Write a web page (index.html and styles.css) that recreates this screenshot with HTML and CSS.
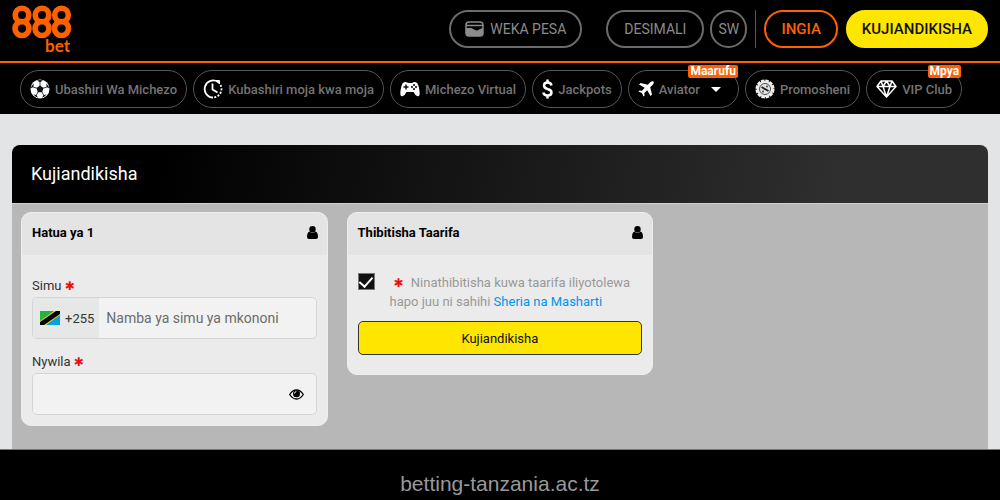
FILE: index.html
```html
<!DOCTYPE html>
<html lang="sw">
<head>
  <meta charset="UTF-8" />
  <title>Kujiandikisha | 888bet</title>
  <meta name="viewport" content="width=device-width, initial-scale=1.0" />
  <link rel="stylesheet" href="styles.css">
</head>
<body>
  <header class="topbar">
    <a class="logo" href="#">
      <svg width="60" height="35" viewBox="0 0 60 35" fill="none" stroke="#ff6000" stroke-width="5.600">
        <circle cx="10" cy="11" r="6.800" /><circle cx="10" cy="24.500" r="7" />
        <circle cx="30" cy="11" r="6.800" /><circle cx="30" cy="24.500" r="7" />
        <circle cx="49.500" cy="11" r="6.800" /><circle cx="49.500" cy="24.500" r="7" />
      </svg>
      <span class="logo-bet">bet</span>
    </a>
    <div class="actions">
      <button class="pill deposit" type="button">
        <svg width="19" height="16" viewBox="0 0 19 16">
          <rect x="1" y="1" width="17" height="14" rx="3" fill="none" stroke="#8b8b8b" stroke-width="1.500" />
          <path d="M1 4.500h17" stroke="#8b8b8b" stroke-width="1.500" />
          <path d="M1 7h5c2 0 3 2.500 6 2.500 2 0 3-2.500 6-2.500v6q0 2-2 2H3q-2 0-2-2z" fill="#8b8b8b" />
        </svg>
        WEKA PESA
      </button>
      <button class="pill odds" type="button">DESIMALI</button>
      <button class="pill lang" type="button">SW</button>
      <span class="divider"></span>
      <a class="pill login" href="#">INGIA</a>
      <a class="pill register" href="#">KUJIANDIKISHA</a>
    </div>
  </header>

  <nav class="menu">
    <a class="item" href="#">
      <svg width="20" height="20" viewBox="0 0 20 20">
        <circle cx="10" cy="10" r="9.500" fill="#fff" />
        <path d="M10 6.500l3.500 2.600-1.300 4.100H7.800L6.500 9.100zM7 1.500l3 1.700 3-1.700A9 9 0 0 0 7 1.500zM.8 9.500L3.300 8l.5-3.500A9 9 0 0 0 .8 9.500zM19.200 9.500L16.700 8l-.5-3.500a9 9 0 0 1 3 5zM3.500 15.500l3 .5 1.500 2.700A9 9 0 0 1 3.500 15.500zM16.500 15.500l-3 .5-1.500 2.700a9 9 0 0 0 4.500-3.200z" fill="#0b1216" />
        <path d="M10 3v4M3 8l4 1.200M17 8l-4 1.200M8 13l-1.500 3M12 13l1.500 3" stroke="#0b1216" stroke-width=".8" />
      </svg>
      Ubashiri Wa Michezo
    </a>
    <a class="item" href="#">
      <svg width="20" height="20" viewBox="0 0 20 20" fill="none" stroke="#fff" stroke-width="1.800">
        <path d="M10 18.500A8.500 8.500 0 1 1 15 3" />
        <path d="M17.500 6A8.500 8.500 0 0 1 10 18.500" stroke-dasharray="2 1.500" />
        <path d="M9.500 4.500V10.500L14.500 13.500" />
        <path d="M13 1.500h3.500v3.500z" fill="#fff" stroke-width="1" />
      </svg>
      Kubashiri moja kwa moja
    </a>
    <a class="item" href="#">
      <svg width="20" height="16" viewBox="0 0 20 16">
        <path d="M5 1q2 0 3 1h4q1-1 3-1 3 0 4 6 1 5 .5 7-.5 1.500-2 1.300Q15.500 15 13.500 11h-7Q4.500 15 2.500 15.300 1 15.500.5 14 0 12 1 7 2 1 5 1z" fill="#fff" />
        <path d="M6 3.500v5M3.500 6h5" stroke="#101010" stroke-width="1.500" />
        <circle cx="14" cy="4" r="1" /><circle cx="16" cy="6" r="1" /><circle cx="14" cy="8" r="1" /><circle cx="12" cy="6" r="1" />
      </svg>
      Michezo Virtual
    </a>
    <a class="item" href="#">
      <svg width="11" height="20" viewBox="0 0 11 20" fill="none" stroke="#fff" stroke-width="2.500">
        <path d="M9.500 6.500Q9 3.500 5.500 3.500 2 3.500 2 6.500q0 2.500 3.500 3.500 4 1 4 3.500 0 3-4 3Q2 16.500 1.300 13.500M5.500 0.500v3.500M5.500 16v3.500" />
      </svg>
      Jackpots
    </a>
    <a class="item" href="#">
      <svg width="16" height="16" viewBox="0 0 16 16">
        <path d="M15.500.5q-1.500-1-3.500 1L9.800 3.800 2.500 2 1 3.500l5.700 3.300L4 9.700 1.500 9.400.4 10.500l3.500 1.600 1.600 3.500 1.100-1.100L6.300 12l2.900-2.700 3.300 5.700L14 13.500 12.200 6.200 14.500 4q2-2 1-3.500z" fill="#fff" />
      </svg>
      Aviator
      <svg class="caret" width="10" height="5" viewBox="0 0 10 5"><path d="M0 0h10L5 5z" fill="#fff" /></svg>
      <span class="badge">Maarufu</span>
    </a>
    <a class="item" href="#">
      <svg width="20" height="20" viewBox="0 0 20 20">
        <circle cx="10" cy="10" r="8.300" fill="#e4e4e4" />
        <circle cx="10" cy="10" r="8.300" fill="none" stroke="#eee" stroke-width="2.500" stroke-dasharray="3.500 0.850" />
        <circle cx="10" cy="10" r="5.500" fill="none" stroke="#555" />
        <path d="M6.500 8l7 4" stroke="#222" stroke-width="2" />
        <circle cx="12" cy="7.500" r="1" fill="#444" /><circle cx="8" cy="12.500" r="1" fill="#444" />
      </svg>
      Promosheni
    </a>
    <a class="item" href="#">
      <svg width="21" height="18" viewBox="0 0 21 18" fill="none" stroke="#fff" stroke-width="1.500" stroke-linejoin="round">
        <path d="M5 1h11l4 5.500L10.500 17 1 6.500zM1 6.500h19M5 1l2 5.500L10.500 17 14 6.500 16 1M7 6.500L10.500 1 14 6.500" />
      </svg>
      VIP Club
      <span class="badge">Mpya</span>
    </a>
  </nav>

  <main class="content">
    <section class="panel">
      <h1 class="panel-title">Kujiandikisha</h1>
      <form class="panel-body">
        <div class="card">
          <div class="card-head">
            <h2>Hatua ya 1</h2>
            <svg width="11" height="13" viewBox="0 0 11 13"><circle cx="5.500" cy="3.200" r="3.200" /><path d="M2.300 5.500q3.200 2.500 6.400 0Q11 6.500 11 11q0 2-2 2H2q-2 0-2-2 0-4.500 2.300-5.500z" /></svg>
          </div>
          <div class="card-body">
            <label for="simu">Simu <span class="req">✱</span></label>
            <div class="field">
              <span class="prefix">
                <svg width="20" height="14" viewBox="0 0 20 14">
                  <path d="M0 0h20L0 14z" fill="#1eb53a" /><path d="M20 0v14H0z" fill="#00a3dd" />
                  <path d="M0 10L14 0h6v4L6 14H0z" fill="#fcd116" /><path d="M0 11L16 0h4v3L4 14H0z" />
                </svg>
                +255
              </span>
              <input type="tel" id="simu" placeholder="Namba ya simu ya mkononi" />
            </div>
            <label for="nywila">Nywila <span class="req">✱</span></label>
            <div class="field">
              <input type="password" id="nywila" />
              <button class="eye" type="button" aria-label="Onyesha nywila">
                <svg width="15" height="11" viewBox="0 0 15 11">
                  <path d="M.7 5.500Q3.500 1 7.500 1t6.800 4.500Q11.500 10 7.500 10T.7 5.500z" fill="none" stroke="#000" stroke-width="1.300" />
                  <circle cx="7.500" cy="4.800" r="3.500" /><path d="M5.500 4.500q0-1.700 1.800-1.900" stroke="#fff" fill="none" />
                </svg>
              </button>
            </div>
          </div>
        </div>

        <div class="card">
          <div class="card-head">
            <h2>Thibitisha Taarifa</h2>
            <svg width="11" height="13" viewBox="0 0 11 13"><circle cx="5.500" cy="3.200" r="3.200" /><path d="M2.300 5.500q3.200 2.500 6.400 0Q11 6.500 11 11q0 2-2 2H2q-2 0-2-2 0-4.500 2.300-5.500z" /></svg>
          </div>
          <div class="card-body">
            <div class="confirm">
              <input type="checkbox" id="thibitisha" checked />
              <label for="thibitisha"><span class="req">✱</span> Ninathibitisha kuwa taarifa iliyotolewa hapo juu ni sahihi <a href="#">Sheria na Masharti</a></label>
            </div>
            <button class="submit" type="submit">Kujiandikisha</button>
          </div>
        </div>
      </form>
    </section>
  </main>

  <footer class="footer">betting-tanzania.ac.tz</footer>
</body>
</html>
```
FILE: styles.css
```css
* {
  box-sizing: border-box;
}
body {
  display: flex;
  flex-direction: column;
  min-height: 100vh;
  margin: 0;
  background-color: #e3e4e6;
  font-family: Roboto, "Liberation Sans", sans-serif;
  font-size: 13px;
}
a {
  text-decoration: none;
}
button, input {
  font-family: inherit;
}
svg {
  flex-shrink: 0;
}

/* top bar */
.topbar {
  display: flex;
  justify-content: space-between;
  padding: 4px 12px 0;
  height: 63px;
  background-color: #000;
  border-bottom: 2px solid #ff6000;
}
.logo {
  display: flex;
  flex-direction: column;
  align-items: flex-end;
  color: #ff6000;
}
.logo-bet {
  margin-right: 2px;
  font-family: Lato, sans-serif;
  font-size: 17px;
  font-weight: 700;
  line-height: 14px;
}
.actions {
  display: flex;
  align-items: center;
  gap: 8px;
  height: 50px;
}
.pill {
  display: flex;
  align-items: center;
  justify-content: center;
  gap: 6px;
  height: 38px;
  padding: 0 14px;
  border: 2px solid #6b6b6b;
  border-radius: 19px;
  background-color: #000;
  color: #8b8b8b;
  font-size: 14px;
}
.deposit {
  margin-right: 16px;
}
.odds {
  margin-right: -2px;
  padding: 0 16px;
}
.lang {
  width: 37px;
  padding: 0;
}
.divider {
  width: 1px;
  height: 38px;
  background-color: #555;
}
.login {
  padding: 0 15px;
  border-color: #ff6000;
  color: #ff6000;
  font-size: 15px;
  font-weight: 500;
}
.register {
  border-color: #ffe600;
  background-color: #ffe600;
  color: #111;
  font-size: 15px;
  font-weight: 500;
}

/* menu */
.menu {
  display: flex;
  gap: 6px;
  padding: 7px 20px 6px;
  background-color: #000;
}
.item {
  position: relative;
  display: flex;
  align-items: center;
  gap: 5px;
  height: 38px;
  padding: 0 9px;
  border: 1px solid #555;
  border-radius: 19px;
  color: #747474;
  font-size: 13px;
  font-weight: 500;
  white-space: nowrap;
}
.caret {
  margin: 0 8px 0 6px;
}
.badge {
  position: absolute;
  top: -6px;
  right: 0;
  padding: 0 2px;
  border-radius: 2px;
  background-color: #ff6000;
  color: #fff;
  font-size: 12px;
  font-weight: 700;
  line-height: 13px;
}

/* form */
.content {
  flex: 1;
  display: flex;
  flex-direction: column;
  padding: 31px 12px 0;
}
.panel {
  flex: 1;
  display: flex;
  flex-direction: column;
}
.panel-title {
  margin: 0;
  padding: 0 19px;
  border-radius: 8px 8px 0 0;
  background: linear-gradient(100deg, #000 15%, #2f2f2f 85%);
  color: #fff;
  font-size: 18px;
  font-weight: 400;
  line-height: 58px;
}
.panel-body {
  flex: 1;
  display: flex;
  align-items: flex-start;
  gap: 19px;
  padding: 8px 9px 23px;
  border-top: 1px solid #d0d0d0;
  background-color: #b7b7b7;
}
.card {
  width: 32%;
  border: 1px solid #eee;
  border-radius: 10px;
  background-color: #ebebeb;
  overflow: hidden;
}
.card-head {
  display: flex;
  align-items: center;
  justify-content: space-between;
  padding: 0 9px 3px 10px;
  height: 42px;
  background-color: #e4e4e4;
}
.card-head h2 {
  margin: 0;
  font-size: 13px;
  font-weight: 700;
}
.card-body {
  padding: 18px 10px 10px;
  color: #333;
}
.card-body > label {
  display: block;
  padding-top: 2px;
  line-height: 22px;
}
.req {
  color: #e8110f;
  font-family: "DejaVu Sans", sans-serif;
  font-size: 12px;
  line-height: 1;
}
.field {
  display: flex;
  height: 42px;
  border: 1px solid #d5d5d5;
  border-radius: 5px;
  background-color: #f2f2f2;
  overflow: hidden;
}
.field + label {
  margin-top: 10px;
}
.prefix {
  display: flex;
  align-items: center;
  gap: 5px;
  padding: 0 5px 0 7px;
  background-color: #e6e7e7;
}
.field input {
  flex: 1;
  min-width: 0;
  padding: 0 7px;
  border: 0;
  background: none;
  font-size: 14px;
}
.field input::placeholder {
  color: #6c6c6c;
}
.eye {
  display: flex;
  align-items: center;
  padding: 0 12px;
  border: 0;
  background: none;
}
.confirm {
  display: flex;
  gap: 15px;
  color: #999;
  line-height: 19px;
}
.confirm input {
  flex-shrink: 0;
  appearance: none;
  display: flex;
  justify-content: center;
  width: 17px;
  height: 17px;
  margin: 0;
  border: 1px solid #777;
  background-color: #111;
}
.confirm input:checked::before {
  content: "";
  width: 6px;
  height: 11px;
  border: solid #fff;
  border-width: 0 2px 2px 0;
  transform: rotate(42deg);
}
.confirm .req {
  margin: 0 4px;
}
.confirm a {
  color: #0094f0;
}
.submit {
  display: block;
  width: 100%;
  height: 34px;
  margin: 10px 0 9px;
  border: 1px solid #333;
  border-radius: 5px;
  background-color: #ffe600;
  color: #111;
  font-size: 13px;
}

.footer {
  border-top: 1px solid #777;
  padding: 20px 0 2px;
  background-color: #000;
  color: #999;
  font-family: "Liberation Sans", Arial, sans-serif;
  font-size: 21px;
  line-height: 28px;
  text-align: center;
}
```
